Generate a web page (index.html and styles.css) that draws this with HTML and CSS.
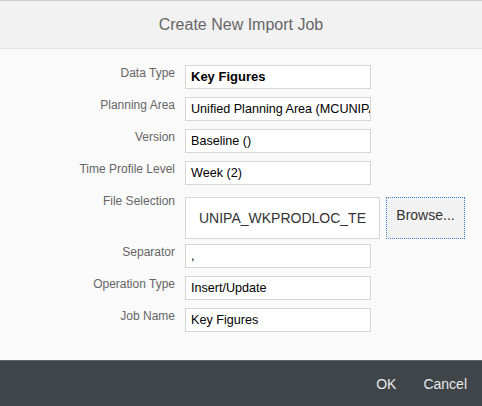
FILE: index.html
```html
<!DOCTYPE html>
<html>
<head>
<meta charset="utf-8">
<link rel="stylesheet" href="styles.css">
</head>
<body>
<div class="dialog">
  <header class="head">Create New Import Job</header>
  <main class="form">
    <div class="row">
      <label class="lbl">Data Type</label>
      <div class="field bold">Key Figures</div>
    </div>
    <div class="row">
      <label class="lbl">Planning Area</label>
      <div class="field">Unified Planning Area (MCUNIPA)</div>
    </div>
    <div class="row">
      <label class="lbl">Version</label>
      <div class="field">Baseline ()</div>
    </div>
    <div class="row">
      <label class="lbl">Time Profile Level</label>
      <div class="field">Week (2)</div>
    </div>
    <div class="row filerow">
      <label class="lbl">File Selection</label>
      <div class="filebox"><span class="fname">UNIPA_WKPRODLOC_TEMPLATE.csv</span></div>
      <div class="browse">Browse...</div>
    </div>
    <div class="row">
      <label class="lbl">Separator</label>
      <div class="field">,</div>
    </div>
    <div class="row">
      <label class="lbl">Operation Type</label>
      <div class="field">Insert/Update</div>
    </div>
    <div class="row">
      <label class="lbl">Job Name</label>
      <div class="field">Key Figures</div>
    </div>
  </main>
  <footer class="foot">
    <span class="btn">OK</span>
    <span class="btn">Cancel</span>
  </footer>
</div>
</body>
</html>
```
FILE: styles.css
```css
html, body {
  margin: 0;
  padding: 0;
}
body {
  width: 482px;
  height: 406px;
  overflow: hidden;
  background: #fafafa;
  font-family: "Liberation Sans", Arial, sans-serif;
}
.dialog {
  display: flex;
  flex-direction: column;
  height: 406px;
}
.head {
  height: 47px;
  border-top: 1px solid #cfcfcf;
  border-bottom: 1px solid #e3e3e3;
  background: #f2f2f2;
  color: #666;
  font-size: 16px;
  display: flex;
  align-items: center;
  justify-content: center;
}
.form {
  flex: 1;
  padding-top: 16px;
  display: flex;
  flex-direction: column;
  gap: 8px;
}
.row {
  display: flex;
  align-items: flex-start;
}
.lbl {
  width: 185px;
  text-align: right;
  font-size: 12px;
  line-height: 16px;
  color: #666;
  padding-right: 10px;
  box-sizing: border-box;
  flex: none;
}
.field {
  width: 186px;
  box-sizing: border-box;
  height: 24px;
  border: 1px solid #d6d6d6;
  background: #fff;
  font-size: 12.6px;
  color: #000;
  line-height: 22px;
  padding: 0 2px 0 5px;
  white-space: nowrap;
  overflow: hidden;
}
.field.bold {
  font-weight: bold;
  font-size: 13px;
}
.filerow {
  margin-bottom: -3px;
}
.filebox {
  margin-top: 4px;
  width: 195px;
  height: 42px;
  box-sizing: border-box;
  border: 1px solid #d6d6d6;
  background: #fff;
  padding: 0 13px;
  display: flex;
  align-items: center;
  overflow: hidden;
}
.fname {
  font-size: 14px;
  color: #333;
  white-space: nowrap;
  overflow: hidden;
  display: block;
  width: 168px;
}
.browse {
  margin-top: 4px;
  margin-left: 6px;
  width: 79px;
  height: 42px;
  box-sizing: border-box;
  border: 1px dotted #3f7fbf;
  background: #f2f2f2;
  font-size: 14px;
  color: #333;
  display: flex;
  align-items: center;
  justify-content: center;
  padding-bottom: 6px;
}
.foot {
  height: 45px;
  border-top: 1px solid #5a6266;
  background: #3f4548;
  display: flex;
  justify-content: flex-end;
  align-items: center;
  gap: 27px;
  padding-right: 15px;
}
.btn {
  color: #e8e8e8;
  font-size: 14px;
}
```
